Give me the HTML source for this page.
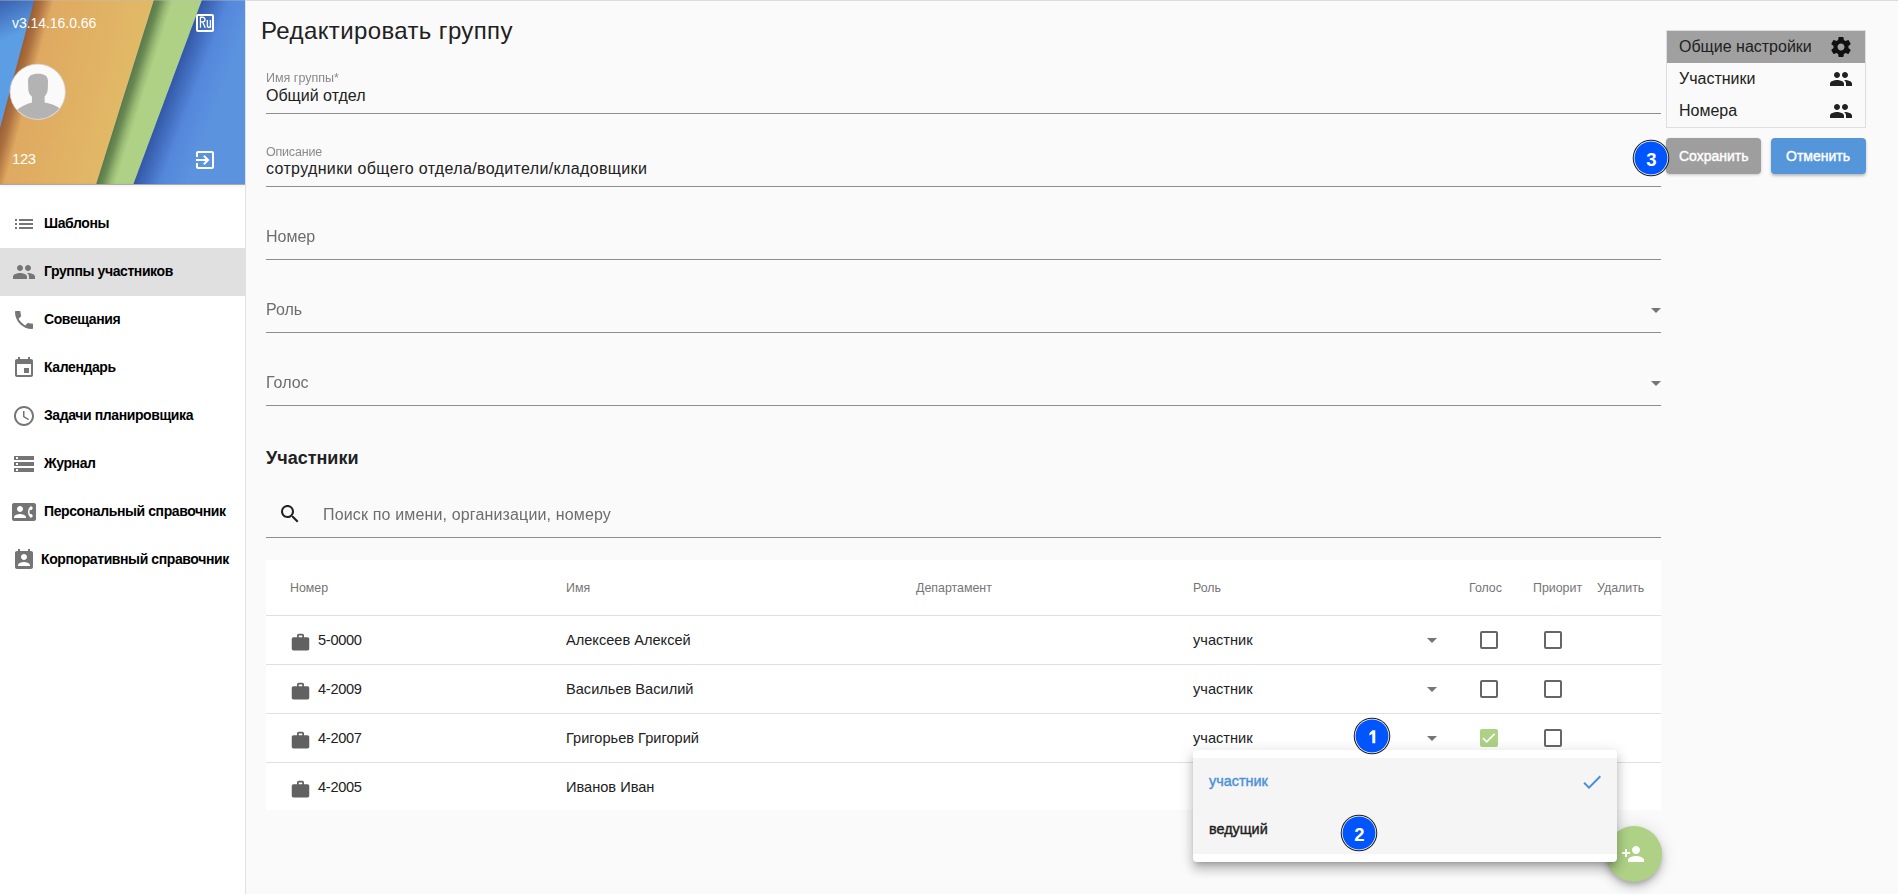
<!DOCTYPE html>
<html><head><meta charset="utf-8">
<style>
*{margin:0;padding:0;box-sizing:border-box}
html,body{width:1898px;height:894px;overflow:hidden;background:#fafafa;font-family:"Liberation Sans",sans-serif;position:relative;-webkit-font-smoothing:antialiased}
#wrap{position:absolute;left:0;top:0;width:1898px;height:894px}
.a{position:absolute;white-space:nowrap;line-height:1}
svg{position:absolute;display:block}
#topline{left:0;top:0;width:1898px;height:1px;background:#dcdcdc}
#side{left:0;top:1px;width:245px;height:893px;background:#fff}
#sideborder{left:245px;top:0;width:1px;height:894px;background:#e0e0e0}
.mi{font-size:14px;font-weight:bold;color:#000;letter-spacing:-0.4px}
.ic{fill:#757575}
.med{-webkit-text-stroke:0.4px currentColor}
.lbl{font-size:12.5px;color:#8a8a8a;will-change:transform}
.val{font-size:16px;color:#212121}
.ph{font-size:16px;color:#6d6d6d;will-change:transform}
.ul{position:absolute;left:266px;width:1395px;height:1px;background:#8e8e8e}
.th{font-size:12.4px;color:#757575}
.td{font-size:14.6px;color:#212121}
.num{letter-spacing:-0.3px}
.rb{position:absolute;left:266px;width:1395px;height:1px;background:#e0e0e0}
.cb{position:absolute;width:18px;height:18px;border:2px solid #666;border-radius:2px}
.badge{position:absolute;width:37px;height:37px;border-radius:50%;background:#0055ff;border:1px solid #111;box-shadow:inset 0 0 0 1px #fff;color:#fff;font-weight:bold;font-size:17px;text-align:center;line-height:35px}
</style></head><body><div id="wrap">
<div id="side" class="a"></div>

<!-- header banner -->
<svg style="left:0;top:0" width="245" height="184" viewBox="0 -1 245 184">
  <defs>
    <linearGradient id="gb1" gradientUnits="userSpaceOnUse" x1="0" y1="0" x2="16" y2="34">
      <stop offset="0" stop-color="#3a62b2"/><stop offset="1" stop-color="#5c9ee3"/>
    </linearGradient>
    <linearGradient id="gor" gradientUnits="userSpaceOnUse" x1="10" y1="90" x2="150" y2="127.5">
      <stop offset="0" stop-color="#9a5e33"/><stop offset="0.05" stop-color="#ad7140"/><stop offset="0.13" stop-color="#dfa961"/><stop offset="1" stop-color="#e2bf68"/>
    </linearGradient>
    <linearGradient id="ggr" gradientUnits="userSpaceOnUse" x1="125.7" y1="90" x2="142.9" y2="95.4">
      <stop offset="0" stop-color="#5a7a47"/><stop offset="0.3" stop-color="#6a8a54"/><stop offset="0.7" stop-color="#98ba73"/><stop offset="1" stop-color="#aed186"/>
    </linearGradient>
    <linearGradient id="gbl" gradientUnits="userSpaceOnUse" x1="168.5" y1="90" x2="215" y2="107.3">
      <stop offset="0" stop-color="#3458a8"/><stop offset="0.5" stop-color="#5487db"/><stop offset="1" stop-color="#5b93df"/>
    </linearGradient>
  </defs>
  <rect x="0" y="-1" width="245" height="185" fill="url(#gb1)"/>
  <polygon points="34.3,-1 154,-1 96.3,183 -15,183" fill="url(#gor)"/>
  <polygon points="154,-1 202,-1 133.5,183 96.3,183" fill="url(#ggr)"/>
  <polygon points="202,-1 245,-1 245,183 133.5,183" fill="url(#gbl)"/>
</svg>
<div class="a" style="left:0;top:184px;width:245px;height:1px;background:#aca9a5;box-shadow:0 1px 3px rgba(0,0,0,0.14)"></div>
<div class="a" style="left:0;top:0;width:245px;height:1px;background:rgba(190,190,190,0.4)"></div>
<div class="a" style="left:245px;top:0;width:1653px;height:1px;background:#dcdcdc"></div>

<div class="a" style="left:12px;top:16px;font-size:14px;color:#fff;letter-spacing:-0.05px">v3.14.16.0.66</div>
<div class="a" style="left:12px;top:152.3px;font-size:14.8px;color:#fff;letter-spacing:-0.3px">123</div>

<!-- Ru icon -->
<div class="a" style="left:196px;top:14px;width:18px;height:18px;border:2px solid #fff;border-radius:2px"></div>
<svg style="left:190px;top:10px" width="30" height="30" viewBox="0 0 30 30"><path fill="none" stroke="#fff" stroke-width="1.3" d="M10.45 17.7V7.25H12.7A2.3 2.3 0 0 1 12.7 11.85H10.45M12.6 11.85L15.2 17.7"/><path fill="none" stroke="#fff" stroke-width="1.25" d="M17.3 9.9V15.2Q17.3 17.4 19 17.4Q20.4 17.4 20.4 15.4M20.4 9.9V17.7"/></svg>
<!-- logout icon -->
<svg style="left:193px;top:148px" width="24" height="24" viewBox="0 0 24 24"><path fill="#fff" d="M10.09 15.59L11.5 17l5-5-5-5-1.41 1.41L12.67 11H3v2h9.67l-2.58 2.59zM19 3H5c-1.11 0-2 .9-2 2v4h2V5h14v14H5v-4H3v4c0 1.1.89 2 2 2h14c1.1 0 2-.9 2-2V5c0-1.1-.9-2-2-2z"/></svg>

<!-- avatar -->
<svg style="left:9px;top:63px" width="58" height="58" viewBox="0 0 58 58">
  <defs><clipPath id="avc"><circle cx="28.7" cy="28.8" r="27.2"/></clipPath></defs>
  <circle cx="28.7" cy="28.8" r="27.7" fill="#fafafa" stroke="#d0d0d0" stroke-width="0.8"/>
  <g clip-path="url(#avc)" fill="#b3b3b3">
    <path d="M22.9 39.5L22.9 33.5C20.5 32 19.3 29 19.3 26L19 18C19 13 22.5 10.8 29 10.8C35.5 10.8 39 13 39 18.5L38.8 26C38.6 29 37.5 31.5 35.6 33.5L35.6 39.5C42 40.5 47 42.5 51 45.5L58 58L0 58L8.5 46.5C12.5 43.5 17 41 22.9 39.5Z"/>
  </g>
</svg>
<!-- menu -->
<div class="a" style="left:0;top:248px;width:245px;height:48px;background:#e0e0e0"></div>
<svg style="left:12px;top:212px" width="24" height="24" viewBox="0 0 24 24"><path class="ic" d="M3 13h2v-2H3v2zm0 4h2v-2H3v2zm0-8h2V7H3v2zm4 4h14v-2H7v2zm0 4h14v-2H7v2zM7 7v2h14V7H7z"/></svg>
<div class="a mi" style="left:44px;top:216px">Шаблоны</div>
<svg style="left:12px;top:260px" width="24" height="24" viewBox="0 0 24 24"><path class="ic" d="M16 11c1.66 0 2.99-1.34 2.99-3S17.66 5 16 5c-1.66 0-3 1.34-3 3s1.34 3 3 3zm-8 0c1.66 0 2.99-1.34 2.99-3S9.66 5 8 5C6.34 5 5 6.34 5 8s1.34 3 3 3zm0 2c-2.33 0-7 1.17-7 3.5V19h14v-2.5c0-2.33-4.67-3.5-7-3.5zm8 0c-.29 0-.62.02-.97.05 1.16.84 1.970 1.97 1.97 3.45V19h6v-2.5c0-2.33-4.67-3.5-7-3.5z"/></svg>
<div class="a mi" style="left:44px;top:264px">Группы участников</div>
<svg style="left:12px;top:308px" width="24" height="24" viewBox="0 0 24 24"><path class="ic" d="M6.62 10.79c1.44 2.83 3.76 5.14 6.59 6.59l2.2-2.2c.27-.27.67-.36 1.02-.24 1.12.37 2.33.57 3.57.57.55 0 1 .45 1 1V20c0 .55-.45 1-1 1-9.390 0-17-7.61-17-17 0-.55.45-1 1-1h3.5c.55 0 1 .45 1 1 0 1.25.2 2.45.57 3.57.11.35.03.74-.25 1.020l-2.2 2.2z"/></svg>
<div class="a mi" style="left:44px;top:312px">Совещания</div>
<svg style="left:12px;top:356px" width="24" height="24" viewBox="0 0 24 24"><path class="ic" d="M17 12h-5v5h5v-5zM16 1v2H8V1H6v2H5c-1.11 0-1.99.9-1.99 2L3 19c0 1.1.89 2 2 2h14c1.1 0 2-.9 2-2V5c0-1.1-.9-2-2-2h-1V1h-2zm3 18H5V8h14v11z"/></svg>
<div class="a mi" style="left:44px;top:360px">Календарь</div>
<svg style="left:12px;top:404px" width="24" height="24" viewBox="0 0 24 24"><path class="ic" d="M11.99 2C6.47 2 2 6.48 2 12s4.47 10 9.99 10C17.52 22 22 17.52 22 12S17.52 2 11.99 2zM12 20c-4.42 0-8-3.58-8-8s3.58-8 8-8 8 3.58 8 8-3.58 8-8 8zm.5-13H11v6l5.25 3.15.75-1.23-4.5-2.67z"/></svg>
<div class="a mi" style="left:44px;top:408px">Задачи планировщика</div>
<svg style="left:12px;top:452px" width="24" height="24" viewBox="0 0 24 24"><path class="ic" d="M2 20h20v-4H2v4zm2-3h2v2H4v-2zM2 4v4h20V4H2zm4 3H4V5h2v2zm-4 7h20v-4H2v4zm2-3h2v2H4v-2z"/></svg>
<div class="a mi" style="left:44px;top:456px">Журнал</div>
<svg style="left:12px;top:500px" width="24" height="24" viewBox="0 0 24 24"><path class="ic" d="M22 3H2C.9 3 0 3.9 0 5v14c0 1.1.9 2 2 2h20c1.1 0 1.99-.9 1.990-2L24 5c0-1.1-.9-2-2-2zM8 6c1.66 0 3 1.34 3 3s-1.34 3-3 3-3-1.34-3-3 1.34-3 3-3zm6 12H2v-1c0-2 4-3.1 6-3.1s6 1.1 6 3.1v1zm3.85-4h1.64L21 16l-1.99 1.99c-1.31-.98-2.28-2.38-2.73-3.99-.18-.64-.28-1.31-.28-2s.1-1.36.28-2c.45-1.62 1.42-3.01 2.73-3.99L21 8l-1.51 2h-1.64c-.22.63-.35 1.3-.35 2s.13 1.37.35 2z"/></svg>
<div class="a mi" style="left:44px;top:504px">Персональный справочник</div>
<svg style="left:12px;top:548px" width="24" height="24" viewBox="0 0 24 24"><path class="ic" d="M19 3h-1V1h-2v2H8V1H6v2H5c-1.11 0-2 .9-2 2v14c0 1.1.89 2 2 2h14c1.1 0 2-.9 2-2V5c0-1.1-.9-2-2-2zm-7 3c1.66 0 3 1.34 3 3s-1.34 3-3 3-3-1.34-3-3 1.34-3 3-3zm6 12H6v-1c0-2 4-3.1 6-3.1s6 1.1 6 3.1v1z"/></svg>
<div class="a mi" style="left:41px;top:552px">Корпоративный справочник</div>

<div id="sideborder" class="a"></div>

<!-- MAIN -->
<div class="a" style="left:261px;top:19px;font-size:24px;color:#212121;letter-spacing:0.38px">Редактировать группу</div>

<div class="a lbl" style="left:266px;top:72px">Имя группы*</div>
<div class="a val" style="left:266px;top:88px">Общий отдел</div>
<div class="ul" style="top:113px"></div>
<div class="a lbl" style="left:266px;top:146px;letter-spacing:-0.2px">Описание</div>
<div class="a val" style="left:266px;top:161px;letter-spacing:0.35px">сотрудники общего отдела/водители/кладовщики</div>
<div class="ul" style="top:186px"></div>

<div class="a ph" style="left:266px;top:229px">Номер</div>
<div class="ul" style="top:259px"></div>
<div class="a ph" style="left:266px;top:302px">Роль</div>
<div class="ul" style="top:332px"></div>
<svg style="left:1644px;top:298px" width="24" height="24" viewBox="0 0 24 24"><path fill="#757575" d="M7 10l5 5 5-5z"/></svg>
<div class="a ph" style="left:266px;top:375px">Голос</div>
<div class="ul" style="top:405px"></div>
<svg style="left:1644px;top:371px" width="24" height="24" viewBox="0 0 24 24"><path fill="#757575" d="M7 10l5 5 5-5z"/></svg>

<div class="a" style="left:266px;top:449px;font-size:18px;font-weight:bold;color:#212121">Участники</div>
<svg style="left:278px;top:502px" width="24" height="24" viewBox="0 0 24 24"><path fill="#212121" d="M15.5 14h-.79l-.28-.27C15.41 12.59 16 11.11 16 9.5 16 5.910 13.09 3 9.5 3S3 5.91 3 9.5 5.91 16 9.5 16c1.61 0 3.09-.59 4.23-1.57l.27.28v.79l5 4.99L20.49 19l-4.99-5zm-6 0C7.01 14 5 11.99 5 9.5S7.01 5 9.5 5 14 7.01 14 9.5 11.99 14 9.5 14z"/></svg>
<div class="a ph" style="left:323px;top:507px;letter-spacing:0.15px">Поиск по имени, организации, номеру</div>
<div class="ul" style="top:537px"></div>

<!-- table -->
<div class="a" style="left:266px;top:560px;width:1395px;height:250px;background:#fff"></div>
<div class="a th" style="left:290px;top:582px">Номер</div>
<div class="a th" style="left:566px;top:582px">Имя</div>
<div class="a th" style="left:916px;top:582px">Департамент</div>
<div class="a th" style="left:1193px;top:582px">Роль</div>
<div class="a th" style="left:1469px;top:582px">Голос</div>
<div class="a th" style="left:1533px;top:582px">Приорит</div>
<div class="a th" style="left:1597px;top:582px">Удалить</div>
<div class="rb" style="top:615px"></div>
<div class="rb" style="top:664px"></div>
<div class="rb" style="top:713px"></div>
<div class="rb" style="top:762px"></div>

<!-- row 1 -->
<svg style="left:289.5px;top:631.5px" width="21" height="21" viewBox="0 0 24 24"><path fill="#616161" d="M20 6h-4V4c0-1.11-.89-2-2-2h-4c-1.11 0-2 .89-2 2v2H4c-1.11 0-1.99.89-1.99 2L2 19c0 1.11.89 2 2 2h16c1.11 0 2-.89 2-2V8c0-1.11-.89-2-2-2zm-6 0h-4V4h4v2z"/></svg>
<div class="a td num" style="left:318px;top:632.5px">5-0000</div>
<div class="a td" style="left:566px;top:632.5px">Алексеев Алексей</div>
<div class="a td" style="left:1193px;top:632.5px">участник</div>
<svg style="left:1420px;top:628px" width="24" height="24" viewBox="0 0 24 24"><path fill="#757575" d="M7 10l5 5 5-5z"/></svg>
<div class="cb" style="left:1480px;top:631px"></div>
<div class="cb" style="left:1544px;top:631px"></div>
<!-- row 2 -->
<svg style="left:289.5px;top:680.5px" width="21" height="21" viewBox="0 0 24 24"><path fill="#616161" d="M20 6h-4V4c0-1.11-.89-2-2-2h-4c-1.11 0-2 .89-2 2v2H4c-1.11 0-1.99.89-1.99 2L2 19c0 1.11.89 2 2 2h16c1.11 0 2-.89 2-2V8c0-1.11-.89-2-2-2zm-6 0h-4V4h4v2z"/></svg>
<div class="a td num" style="left:318px;top:681.5px">4-2009</div>
<div class="a td" style="left:566px;top:681.5px">Васильев Василий</div>
<div class="a td" style="left:1193px;top:681.5px">участник</div>
<svg style="left:1420px;top:677px" width="24" height="24" viewBox="0 0 24 24"><path fill="#757575" d="M7 10l5 5 5-5z"/></svg>
<div class="cb" style="left:1480px;top:680px"></div>
<div class="cb" style="left:1544px;top:680px"></div>
<!-- row 3 -->
<svg style="left:289.5px;top:729.5px" width="21" height="21" viewBox="0 0 24 24"><path fill="#616161" d="M20 6h-4V4c0-1.11-.89-2-2-2h-4c-1.11 0-2 .89-2 2v2H4c-1.11 0-1.99.89-1.99 2L2 19c0 1.11.89 2 2 2h16c1.11 0 2-.89 2-2V8c0-1.11-.89-2-2-2zm-6 0h-4V4h4v2z"/></svg>
<div class="a td num" style="left:318px;top:730.5px">4-2007</div>
<div class="a td" style="left:566px;top:730.5px">Григорьев Григорий</div>
<div class="a td" style="left:1193px;top:730.5px">участник</div>
<svg style="left:1420px;top:726px" width="24" height="24" viewBox="0 0 24 24"><path fill="#757575" d="M7 10l5 5 5-5z"/></svg>
<div class="a" style="left:1480px;top:729px;width:18px;height:18px;background:#aed186;border-radius:2px"></div>
<svg style="left:1480px;top:729px" width="18" height="18" viewBox="0 0 18 18"><path fill="none" stroke="#fff" stroke-width="1.7" d="M3 9.2l3.6 3.6 8-8"/></svg>
<div class="cb" style="left:1544px;top:729px"></div>
<!-- row 4 -->
<svg style="left:289.5px;top:778.5px" width="21" height="21" viewBox="0 0 24 24"><path fill="#616161" d="M20 6h-4V4c0-1.11-.89-2-2-2h-4c-1.11 0-2 .89-2 2v2H4c-1.11 0-1.99.89-1.99 2L2 19c0 1.11.89 2 2 2h16c1.11 0 2-.89 2-2V8c0-1.11-.89-2-2-2zm-6 0h-4V4h4v2z"/></svg>
<div class="a td num" style="left:318px;top:779.5px">4-2005</div>
<div class="a td" style="left:566px;top:779.5px">Иванов Иван</div>

<!-- FAB -->
<div class="a" style="left:1605.5px;top:826px;width:56px;height:56px;border-radius:50%;background:#aed186;box-shadow:0 3px 5px -1px rgba(0,0,0,0.2),0 6px 10px 0 rgba(0,0,0,0.14),0 1px 18px 0 rgba(0,0,0,0.12)"></div>
<svg style="left:1621px;top:842px" width="24" height="24" viewBox="0 0 24 24"><path fill="#fff" d="M15 12c2.21 0 4-1.79 4-4s-1.79-4-4-4-4 1.79-4 4 1.79 4 4 4zm-9-2V7H4v3H1v2h3v3h2v-3h3v-2H6zm9 4c-2.67 0-8 1.34-8 4v2h16v-2c0-2.660-5.33-4-8-4z"/></svg>

<!-- dropdown menu -->
<div class="a" style="left:1193px;top:750px;width:424px;height:112px;background:#fff;border-radius:4px;box-shadow:0 5px 5px -3px rgba(0,0,0,0.2),0 8px 10px 1px rgba(0,0,0,0.14),0 3px 14px 2px rgba(0,0,0,0.12)"></div>
<div class="a" style="left:1193px;top:758px;width:424px;height:96px;background:#f5f5f5"></div>
<div class="a med" style="left:1209px;top:774px;font-size:14.4px;color:#4a90d9">участник</div>
<svg style="left:1580px;top:770px" width="24" height="24" viewBox="0 0 24 24"><path fill="#4a90d9" d="M9 16.17L4.83 12l-1.42 1.41L9 19 21 7l-1.41-1.41z"/></svg>
<div class="a med" style="left:1209px;top:822px;font-size:14.4px;color:#212121">ведущий</div>


<!-- right panel -->
<div class="a" style="left:1666px;top:30px;width:200px;height:98px;border:1px solid #dedede;background:#fafafa"></div>
<div class="a" style="left:1667px;top:31px;width:198px;height:32px;background:#a0a0a0"></div>
<div class="a" style="left:1679px;top:39px;font-size:16px;color:#212121">Общие настройки</div>
<div class="a" style="left:1679px;top:71px;font-size:16px;color:#212121">Участники</div>
<div class="a" style="left:1679px;top:103px;font-size:16px;color:#212121">Номера</div>
<svg style="left:1829px;top:35px" width="24" height="24" viewBox="0 0 24 24"><path fill="#111" d="M19.43 12.98c.04-.32.07-.64.07-.98s-.03-.66-.07-.98l2.11-1.65c.19-.15.24-.42.12-.64l-2-3.46c-.12-.22-.39-.3-.61-.22l-2.49 1c-.52-.4-1.08-.73-1.69-.98l-.38-2.65C14.46 2.18 14.25 2 14 2h-4c-.25 0-.46.18-.49.42l-.38 2.65c-.61.25-1.17.59-1.69.98l-2.49-1c-.23-.09-.49 0-.61.22l-2 3.46c-.13.22-.07.49.12.64l2.11 1.65c-.04.32-.07.65-.07.98s.03.66.07.98l-2.11 1.65c-.19.15-.24.42-.12.64l2 3.46c.12.22.39.3.61.22l2.49-1c.52.4 1.08.73 1.69.98l.38 2.65c.03.24.24.42.49.42h4c.25 0 .46-.18.49-.42l.38-2.65c.61-.25 1.17-.59 1.69-.98l2.49 1c.23.09.49 0 .61-.22l2-3.46c.12-.22.07-.49-.12-.64l-2.11-1.65zM12 15.5c-1.93 0-3.5-1.57-3.5-3.5s1.57-3.5 3.5-3.5 3.5 1.57 3.5 3.5-1.57 3.5-3.5 3.5z"/></svg>
<svg style="left:1829px;top:67px" width="24" height="24" viewBox="0 0 24 24"><path fill="#212121" d="M16 11c1.66 0 2.99-1.34 2.99-3S17.66 5 16 5c-1.66 0-3 1.34-3 3s1.34 3 3 3zm-8 0c1.66 0 2.99-1.34 2.99-3S9.66 5 8 5C6.34 5 5 6.34 5 8s1.34 3 3 3zm0 2c-2.33 0-7 1.17-7 3.5V19h14v-2.5c0-2.33-4.67-3.5-7-3.5zm8 0c-.29 0-.62.02-.97.05 1.16.84 1.97 1.97 1.97 3.45V19h6v-2.5c0-2.33-4.67-3.5-7-3.5z"/></svg>
<svg style="left:1829px;top:99px" width="24" height="24" viewBox="0 0 24 24"><path fill="#212121" d="M16 11c1.66 0 2.99-1.34 2.99-3S17.66 5 16 5c-1.66 0-3 1.34-3 3s1.34 3 3 3zm-8 0c1.66 0 2.99-1.34 2.99-3S9.66 5 8 5C6.34 5 5 6.34 5 8s1.34 3 3 3zm0 2c-2.33 0-7 1.17-7 3.5V19h14v-2.5c0-2.33-4.67-3.5-7-3.5zm8 0c-.29 0-.62.02-.97.05 1.16.84 1.97 1.97 1.97 3.45V19h6v-2.5c0-2.33-4.67-3.5-7-3.5z"/></svg>

<div class="a" style="left:1666px;top:138px;width:95px;height:36px;background:#9e9e9e;border-radius:4px;box-shadow:0 1px 3px rgba(0,0,0,0.2)"></div>
<div class="a med" style="left:1679px;top:149px;font-size:14px;color:#fff">Сохранить</div>
<div class="a" style="left:1771px;top:138px;width:95px;height:36px;background:#5596da;border-radius:4px;box-shadow:0 2px 3px rgba(0,0,0,0.25)"></div>
<div class="a med" style="left:1786px;top:149px;font-size:14px;color:#fff">Отменить</div>

<svg style="left:1630.8px;top:137.9px" width="40" height="40" viewBox="0 0 40 40"><circle cx="20" cy="20" r="18.3" fill="#1a1a1a"/><circle cx="20" cy="20" r="17.3" fill="#fff"/><circle cx="20" cy="20" r="16.5" fill="#0055ff"/><text x="20.5" y="27.7" text-anchor="middle" font-family="Liberation Sans" font-weight="bold" font-size="18.5" fill="#fff">3</text></svg>
<svg style="left:1351.9px;top:715.9px" width="40" height="40" viewBox="0 0 40 40"><circle cx="20" cy="20" r="18.3" fill="#1a1a1a"/><circle cx="20" cy="20" r="17.3" fill="#fff"/><circle cx="20" cy="20" r="16.5" fill="#0055ff"/><path fill="#fff" d="M20.3 14.2h3v13h-3v-9.2l-2.9 1.6v-2.4z"/></svg>
<svg style="left:1339.0px;top:812.9px" width="40" height="40" viewBox="0 0 40 40"><circle cx="20" cy="20" r="18.3" fill="#1a1a1a"/><circle cx="20" cy="20" r="17.3" fill="#fff"/><circle cx="20" cy="20" r="16.5" fill="#0055ff"/><text x="20.5" y="27.7" text-anchor="middle" font-family="Liberation Sans" font-weight="bold" font-size="18.5" fill="#fff">2</text></svg>
</div></body></html>
